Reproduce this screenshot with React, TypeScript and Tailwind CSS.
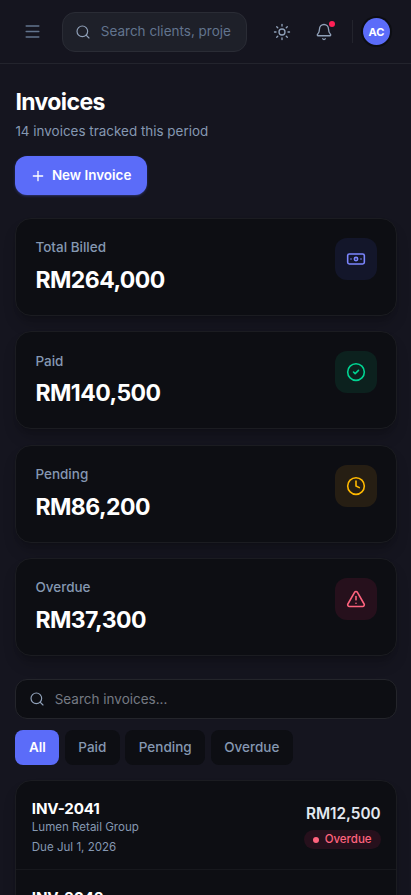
import { Banknote, Bell, CircleCheck, Clock, Menu, Plus, Search, Sun, TriangleAlert } from 'lucide-react';

const stats = [
  { label: 'Total Billed', value: 'RM264,000', icon: Banknote, tone: 'bg-[#13162a] text-[#7c86ff]' },
  { label: 'Paid', value: 'RM140,500', icon: CircleCheck, tone: 'bg-[#0c211e] text-[#00d492]' },
  { label: 'Pending', value: 'RM86,200', icon: Clock, tone: 'bg-[#261e13] text-[#ffb900]' },
  { label: 'Overdue', value: 'RM37,300', icon: TriangleAlert, tone: 'bg-[#26101c] text-[#ff637e]' },
];

const filters = ['All', 'Paid', 'Pending', 'Overdue'];

const invoices = [
  { id: 'INV-2041', client: 'Lumen Retail Group', due: 'Due Jul 1, 2026', amount: 'RM12,500', status: 'Overdue' },
  { id: 'INV-2042', client: 'Northwind Studio', due: 'Due Jul 4, 2026', amount: 'RM8,400', status: 'Overdue' },
];

function Header() {
  return (
    <header className="flex h-[64px] shrink-0 items-center border-b border-[#23242d] pl-[23px] pr-[21px]">
      <Menu size={19} strokeWidth={1.75} className="shrink-0 text-[#62748e]" />
      <div className="ml-[19.5px] flex h-[40px] w-[185px] shrink-0 items-center rounded-[13px] border border-[#2a2c35] bg-[#1e2029] pl-[12.5px]">
        <Search size={16} strokeWidth={1.75} className="shrink-0 text-[#90a1b9]" />
        <span className="ml-[9.8px] w-[131px] overflow-hidden whitespace-nowrap text-[13.5px] text-[#62748e]">
          Search clients, proje
        </span>
      </div>
      <Sun size={18} strokeWidth={1.75} className="ml-[26.5px] shrink-0 text-[#90a1b9]" />
      <div className="relative ml-[24px] shrink-0">
        <Bell size={18} strokeWidth={1.75} className="text-[#90a1b9]" />
        <span className="absolute -top-[2px] right-[-2px] size-[6px] rounded-full bg-[#ff2056]" />
      </div>
      <div className="ml-[19px] h-[23px] w-px shrink-0 bg-[#23242d]" />
      <div className="ml-[10px] flex size-[27px] shrink-0 items-center justify-center rounded-full bg-[#5b6cf9] pt-px text-[11px] font-bold text-white ring-2 ring-[#0d0e13]">
        AC
      </div>
    </header>
  );
}

export default function App() {
  return (
    <div className="flex h-[895px] flex-col overflow-hidden bg-[#15151f] font-['Inter',sans-serif]">
      <Header />
      <main className="flex flex-col pl-[15.4px] pr-[14px] pt-[23px]">
        <h1 className="text-[23px] font-bold leading-[30px] tracking-[-0.6px] text-white">Invoices</h1>
        <p className="mt-[4px] text-[13.45px] leading-[20px] text-[#8598b2]">14 invoices tracked this period</p>
        <button className="mt-[15px] flex h-[39px] w-[131.5px] items-center rounded-[12px] bg-[#5b6cf9] pl-[15px] text-[13.45px] font-semibold text-white shadow-sm shadow-[#5b6cf9]/30">
          <Plus size={16} strokeWidth={2} className="mr-[5.5px]" />
          New Invoice
        </button>

        <div className="mt-[23px] flex flex-col gap-[15.3px]">
          {stats.map(({ label, value, icon: Icon, tone }) => (
            <div
              key={label}
              className="flex h-[98px] items-start justify-between rounded-[16px] border border-[#1b1c21] bg-[#0d0e13] px-[19px] pt-[19px] shadow-lg shadow-black/20"
            >
              <div className="-mt-[0.6px]">
                <p className="text-[13.5px] font-medium leading-[20px] text-[#8598b2]">{label}</p>
                <p className="mt-[7.6px] text-[23px] font-bold leading-[31px] tracking-[-0.55px] text-white">{value}</p>
              </div>
              <div className={`flex size-[42px] items-center justify-center rounded-[12px] ${tone}`}>
                <Icon size={20} strokeWidth={1.9} />
              </div>
            </div>
          ))}
        </div>

        <div className="mt-[23px] flex h-[40px] items-center rounded-[12px] border border-[#24252b] bg-[#0d0e13] pl-[12.5px]">
          <Search size={16} strokeWidth={1.75} className="text-[#90a1b9]" />
          <span className="ml-[9.8px] text-[13.5px] text-[#757a83]">Search invoices...</span>
        </div>

        <div className="mt-[11px] flex gap-[5.5px]">
          {filters.map((name, i) => (
            <button
              key={name}
              className={`h-[35px] rounded-[8px] px-[13.5px] text-[13.5px] ${
                i === 0 ? 'bg-[#5b6cf9] font-semibold text-white' : 'bg-[#0d0e13] font-medium text-[#8598b2]'
              }`}
            >
              {name}
            </button>
          ))}
        </div>

        <div className="mt-[15.6px] rounded-[16px] border border-[#1b1c21] bg-[#0d0e13] shadow-lg shadow-black/20">
          {invoices.map((inv) => (
            <div key={inv.id} className="flex h-[89px] items-center justify-between border-b border-[#17181d] px-[15.4px]">
              <div className="pt-[3px]">
                <p className="text-[15.2px] font-bold leading-[20px] tracking-[-0.15px] text-white">{inv.id}</p>
                <p className="text-[11.55px] leading-[16px] text-[#8598b2]">{inv.client}</p>
                <p className="mt-[4px] text-[11.55px] leading-[16px] text-[#8598b2]">{inv.due}</p>
              </div>
              <div className="flex flex-col items-end pt-[0.6px]">
                <p className="text-[15.3px] font-semibold leading-[23px] text-[#e2e8f0]">{inv.amount}</p>
                <span className="mt-[5.2px] flex h-[19px] items-center gap-[6px] rounded-full bg-[#26101c] px-[9px] text-[11.5px] font-medium text-[#ff637e]">
                  <i className="size-[6px] rounded-full bg-[#ff637e]" />
                  {inv.status}
                </span>
              </div>
            </div>
          ))}
        </div>
      </main>
    </div>
  );
}
